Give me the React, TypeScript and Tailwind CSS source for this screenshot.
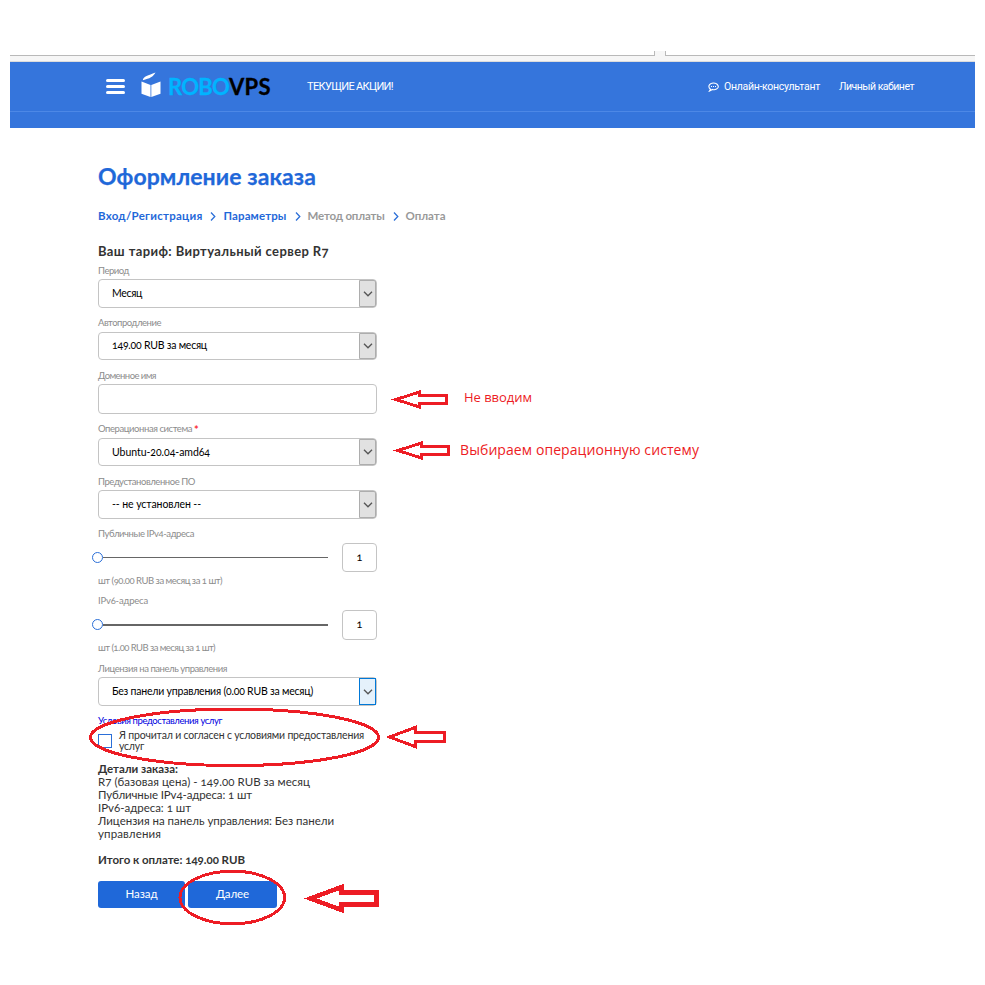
import { useLayoutEffect, useRef } from 'react';

type FitProps = { w: number; children: string; className?: string };

// Spreads a single line of text over a known width through its letter spacing.
function Fit({ w, children, className = '' }: FitProps) {
  const ref = useRef<HTMLSpanElement>(null);
  useLayoutEffect(() => {
    const el = ref.current;
    if (!el) return;
    el.style.letterSpacing = '0px';
    const natural = el.getBoundingClientRect().width;
    el.style.letterSpacing = `${(w - natural) / children.length}px`;
  }, [w, children]);
  return (
    <span ref={ref} className={`inline-block whitespace-pre ${className}`}>
      {children}
    </span>
  );
}

function Label({ w, children, required, className = 'mt-[7px] h-[17px]' }: FitProps & { required?: boolean }) {
  return (
    <div className={`flex items-center text-[9.5px] leading-none text-[#8c8c8c] ${className}`}>
      <Fit w={w}>{children}</Fit>
      {required && <span className="ml-0.5 text-[11px] font-bold text-red-500">*</span>}
    </div>
  );
}

function Select({
  w,
  children,
  h = 'h-[29px]',
  pad = 'pb-px',
  active,
}: FitProps & { h?: string; pad?: string; active?: boolean }) {
  return (
    <div className={`flex items-stretch justify-between rounded-[4px] border border-[#c4c4c4] bg-white ${h}`}>
      <div className={`flex items-center pl-[13px] text-[10.5px] leading-none text-black ${pad}`}>
        <Fit w={w}>{children}</Fit>
      </div>
      <div
        className={`flex w-[17px] items-center border pl-[2.5px] ${
          active ? 'border-[#0078d7] bg-[#e5f1fb]' : 'rounded-r-[2px] border-[#adadad] bg-[#e1e1e1]'
        }`}
      >
        <svg className="shrink-0" width="10" height="6" viewBox="0 0 10 6" fill="none" stroke="#555" strokeWidth="1.3">
          <path d="M1 .8 5 4.800 9 .8" />
        </svg>
      </div>
    </div>
  );
}

function Slider({ h, thick }: { h: string; thick?: boolean }) {
  return (
    <div className={`flex items-center ${h}`}>
      <div className={`-ml-1.5 size-[11px] shrink-0 rounded-full border border-[#2b6fd8] bg-white ${thick ? 'mb-px' : ''}`} />
      <div className={`w-[225px] bg-[#666] ${thick ? 'h-0.5' : 'h-px'}`} />
      <div className="ml-[14px] flex h-full w-[35px] items-center justify-center rounded-[4px] border border-[#c4c4c4] pb-px text-[11px] text-black">
        1
      </div>
    </div>
  );
}

function Chevron() {
  return (
    <svg width="6" height="9" viewBox="0 0 6 9" fill="none" stroke="#2b6fd8" strokeWidth="1.3">
      <path d="M1 .5 4.800 4.500 1 8.500" />
    </svg>
  );
}

export default function App() {
  return (
    <div className="relative h-[985px] w-[985px] overflow-hidden bg-white px-[10px] pt-[51px] font-[Lato,'Open_Sans',sans-serif] oldstyle-nums">
      <div className="flex h-[11px] justify-between border-b border-[#dcdcdc] bg-[#f6f6f6]">
        <div className="h-[5px] w-[645px] border-r border-b border-[#b9b9b9] bg-white" />
        <div className="h-[5px] w-[310px] border-b border-l border-[#b9b9b9] bg-white" />
      </div>

      <header className="h-[66px] bg-[#3575dc] text-white">
        <div className="flex h-[50px] items-center border-b border-[#4d88e6] pl-24">
          <div className="flex w-[19px] flex-col gap-[3px] pb-px">
            <div className="h-[3px] rounded-full bg-white" />
            <div className="h-[3px] rounded-full bg-white" />
            <div className="h-[3px] rounded-full bg-white" />
          </div>
          <svg className="mb-[3px] ml-[16px]" width="20" height="26" viewBox="0 0 20 26" fill="white">
            <path d="M.5 9.500 9.500 13v12L.5 21.800z" />
            <path d="M19.500 9.500 10.300 13v12l9.200-3.200z" />
            <path d="M1.800 8.300C2.500 4 7 3.500 14.500.5 12 5 9 6.300 1.800 8.300z" />
          </svg>
          <div className="mt-px ml-[7px] text-[22px] leading-none font-bold">
            <Fit w={61} className="text-[#00b4ff] [-webkit-text-stroke:0.3px_#00b4ff]">ROBO</Fit>
            <Fit w={42} className="text-black [-webkit-text-stroke:0.3px_#000]">VPS</Fit>
          </div>
          <Fit w={86} className="ml-[36px] pt-px font-[Roboto] text-[11px]">ТЕКУЩИЕ АКЦИИ!</Fit>
          <svg className="ml-[315px]" width="11" height="10" viewBox="0 0 11 10" fill="none" stroke="white" strokeWidth="1.1">
            <path d="M2.500 7.300C-.5 5 1 1 5.500 1s6.500 4.500 3 6c-1 .6-3 .8-4 .4L1.500 9z" />
            <path d="M3 4.500h1M5 4.500h1M7 4.500h1" />
          </svg>
          <Fit w={96} className="ml-[5px] font-[Roboto] text-[10.5px]">Онлайн-консультант</Fit>
          <Fit w={75} className="ml-[19px] font-[Roboto] text-[10.5px]">Личный кабинет</Fit>
        </div>
      </header>

      <main className="ml-[88px] w-[279px] text-[#333]">
        <h1 className="mt-[36px] flex h-6 items-center text-[23px] leading-none font-bold text-[#1f68d9] [-webkit-text-stroke:0.25px_#1f68d9]">
          <Fit w={218}>Оформление заказа</Fit>
        </h1>
        <nav className="mt-[20px] flex h-4 w-[360px] items-center text-[11.5px] leading-none font-bold text-[#1f68d9]">
          <Fit w={104.500}>Вход/Регистрация</Fit>
          <span className="mr-[8px] ml-[7px]"><Chevron /></span>
          <Fit w={63}>Параметры</Fit>
          <span className="mr-[7px] ml-[8px]"><Chevron /></span>
          <Fit w={77} className="text-[#999]">Метод оплаты</Fit>
          <span className="mr-[7px] ml-[8px]"><Chevron /></span>
          <Fit w={40} className="text-[#999]">Оплата</Fit>
        </nav>
        <h2 className="mt-[18px] flex h-5 items-center pb-0.5 text-[13px] leading-none font-bold">
          <Fit w={231}>Ваш тариф: Виртуальный сервер R7</Fit>
        </h2>

        <Label w={31} className="h-[17px]">Период</Label>
        <Select w={30}>Месяц</Select>
        <Label w={63} className="mt-[7px] h-[17px] pb-px">Автопродление</Label>
        <Select w={95} h="h-[28px]" pad="pb-0.5">149.00 RUB за месяц</Select>
        <Label w={58}>Доменное имя</Label>
        <div className="h-[30px] rounded-[4px] border border-[#c4c4c4]" />
        <Label w={94} required className="mt-[7px] h-[17px] pb-px">Операционная система</Label>
        <Select w={98} h="h-[28px]" pad="pb-0">Ubuntu-20.04-amd64</Select>
        <Label w={97}>Предустановленное ПО</Label>
        <Select w={89}>-- не установлен --</Select>
        <Label w={96} className="mt-[7px] h-[17px] pb-px">Публичные IPv4-адреса</Label>
        <Slider h="h-[29px]" />
        <Label w={124} className="h-[18px] pb-px">шт (90.00 RUB за месяц за 1 шт)</Label>
        <Label w={50} className="mt-0.5 h-[18px] pb-px">IPv6-адреса</Label>
        <Slider h="h-[30px]" thick />
        <Label w={117} className="h-[16px] pb-px">шт (1.00 RUB за месяц за 1 шт)</Label>
        <Label w={129} className="mt-1 h-[17px]">Лицензия на панель управления</Label>
        <Select w={201} active>Без панели управления (0.00 RUB за месяц)</Select>

        <div className="mt-2 flex h-[14px] items-center pb-px text-[9.5px] leading-none text-[#0000e0]">
          <Fit w={124}>Условия предоставления услуг</Fit>
        </div>
        <div className="mt-[2px] flex h-[22px] text-[10.5px] leading-[11px]">
          <div className="mt-1 mr-[7px] size-[14px] shrink-0 border border-[#2b6fd8] bg-white" />
          <div className="flex flex-col items-start">
            <Fit w={245}>Я прочитал и согласен с условиями предоставления</Fit>
            <Fit w={25}>услуг</Fit>
          </div>
        </div>

        <div className="mt-[10px] flex flex-col items-start text-[11.5px] leading-[13px]">
          <Fit w={80} className="font-bold">Детали заказа:</Fit>
          <Fit w={212}>R7 (базовая цена) - 149.00 RUB за месяц</Fit>
          <Fit w={154}>Публичные IPv4-адреса: 1 шт</Fit>
          <Fit w={93}>IPv6-адреса: 1 шт</Fit>
          <Fit w={236}>Лицензия на панель управления: Без панели</Fit>
          <Fit w={63}>управления</Fit>
          <Fit w={147} className="mt-[13px] font-bold">Итого к оплате: 149.00 RUB</Fit>
        </div>
        <div className="mt-[15px] flex gap-[3px] text-[11.5px] text-white">
          <button className="h-[27px] w-[87px] rounded-[3px] bg-[#1f68d9] pb-0.5"><Fit w={32}>Назад</Fit></button>
          <button className="h-[27px] w-[89px] rounded-[3px] bg-[#1f68d9] pb-0.5"><Fit w={33}>Далее</Fit></button>
        </div>
      </main>

      <svg
        className="pointer-events-none absolute inset-0"
        width="985"
        height="985"
        fill="none"
        stroke="#ed1c24"
        strokeWidth="3"
        shapeRendering="crispEdges"
      >
        <ellipse cx="234.500" cy="737.300" rx="144" ry="28.300" />
        <ellipse cx="232.300" cy="897.500" rx="52.300" ry="26.300" />
        <path d="M396 399.500 419.500 392V395.500H446.500V403.500H419.500V407z" />
        <path d="M398 450.500 421.500 443V446.500H448.500V454.500H421.500V458z" />
        <path d="M389.500 737 415 727.500V732.500H444.500V741.500H415V746.500z" />
        <path strokeWidth="4.500" d="M310.500 898.500 341.500 887V892.500H376.500V904.500H341.500V910z" />
      </svg>
      <div className="absolute top-[388px] left-[464px] font-['Open_Sans'] text-[13px] leading-[18px] text-[#ed1c24]">
        <Fit w={68}>Не вводим</Fit>
      </div>
      <div className="absolute top-[441px] left-[460px] font-['Open_Sans'] text-[14px] leading-[18px] text-[#ed1c24]">
        <Fit w={239}>Выбираем операционную систему</Fit>
      </div>
    </div>
  );
}
